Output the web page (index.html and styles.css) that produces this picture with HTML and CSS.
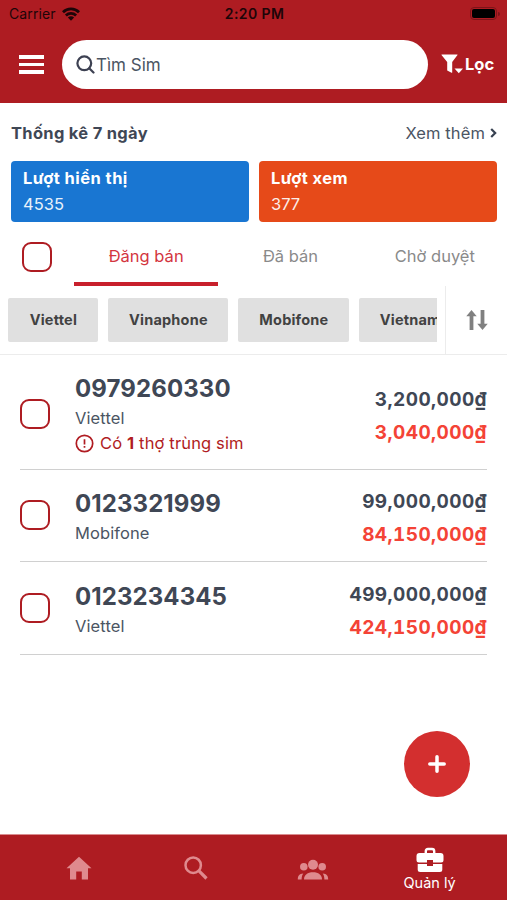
FILE: index.html
```html
<!DOCTYPE html>
<html lang="vi">
<head>
    <meta charset="UTF-8">
    <meta name="viewport" content="width=device-width, initial-scale=1.0">
    <title>Quản lý sim</title>
    <link rel="stylesheet" href="styles.css">
</head>
<body>
    <div class="app">
        <header class="header">
            <div class="status-bar">
                <div class="carrier">
                    <span>Carrier</span>
                    <svg width="18" height="14" viewBox="0 0 18 14" fill="none" stroke="#1d0508" stroke-width="2.8">
                        <path d="M1 5.2C5.500.8 12.500.8 17 5.200"/>
                        <path d="M3.900 8.500c2.900-2.800 7.300-2.800 10.200 0"/>
                        <path d="M9 13.800 5.900 10.600c1.800-1.700 4.400-1.700 6.200 0z" fill="#1d0508" stroke="none"/>
                    </svg>
                </div>
                <span class="time">2:20 PM</span>
                <div class="battery-wrap">
                    <div class="battery"><div class="battery-level"></div></div>
                    <div class="battery-tip"></div>
                </div>
            </div>
            <div class="search-row">
                <div class="menu-btn"><span></span><span></span><span></span></div>
                <div class="search-box">
                    <svg width="19" height="19" viewBox="0 0 19 19" fill="none" stroke="#3d4152" stroke-width="2.2" stroke-linecap="round">
                        <circle cx="8.300" cy="8.300" r="6.900"/>
                        <path d="M13.200 13.200 17.500 17.500"/>
                    </svg>
                    <span>Tìm Sim</span>
                </div>
                <div class="filter-btn">
                    <svg width="23" height="20" viewBox="0 0 23 20" fill="#fff">
                        <path d="M.8.500h15.400q.6 0 .3.600L11.200 8v10.300q0 .8-.7.400L6.200 16.500V8L.5 1.100Q.2.500.8.500z"/>
                        <path d="M13.500 14.500h8.500l-4.200 4.700z"/>
                    </svg>
                    <span>Lọc</span>
                </div>
            </div>
        </header>

        <section class="stats">
            <div class="stats-head">
                <strong>Thống kê 7 ngày</strong>
                <span class="more">Xem thêm
                    <svg width="7" height="10" viewBox="0 0 7 10" fill="none" stroke="#374151" stroke-width="2.200"><path d="M1.200 1 5.200 5 1.200 9"/></svg>
                </span>
            </div>
            <div class="stats-cards">
                <div class="card blue"><strong>Lượt hiển thị</strong><span>4535</span></div>
                <div class="card orange"><strong>Lượt xem</strong><span>377</span></div>
            </div>
        </section>

        <div class="tabs">
            <div class="check-all"><span class="checkbox"></span></div>
            <div class="tab active">Đăng bán</div>
            <div class="tab">Đã bán</div>
            <div class="tab">Chờ duyệt</div>
        </div>

        <div class="filters">
            <div class="chips">
                <span class="chip viettel">Viettel</span>
                <span class="chip vinaphone">Vinaphone</span>
                <span class="chip mobifone">Mobifone</span>
                <span class="chip vietnamobile">Vietnamobile</span>
            </div>
            <div class="sort">
                <svg width="22" height="20" viewBox="0 0 22 20" fill="none" stroke="#808080" stroke-width="3.800">
                    <path d="M5.500 20V4"/>
                    <path d="M5.500 0 10.700 6.200H.3z" fill="#808080" stroke="none"/>
                    <path d="M16.500 0v16"/>
                    <path d="M16.500 20 11.300 13.800h10.400z" fill="#808080" stroke="none"/>
                </svg>
            </div>
        </div>

        <main class="list">
            <div class="row tall">
                <span class="checkbox"></span>
                <div class="info">
                    <div class="number">0979260330</div>
                    <div class="provider">Viettel</div>
                    <div class="warning">
                        <svg width="19" height="19" viewBox="0 0 19 19" fill="none" stroke="#b01c22" stroke-width="1.700">
                            <circle cx="9.500" cy="9.500" r="8.200"/>
                            <path d="M9.500 5.300v5.200M9.500 12v1.800"/>
                        </svg>
                        <span>Có <b>1</b> thợ trùng sim</span>
                    </div>
                </div>
                <div class="prices">
                    <div>3,200,000₫</div>
                    <div class="net">3,040,000₫</div>
                </div>
            </div>
            <div class="row">
                <span class="checkbox"></span>
                <div class="info">
                    <div class="number">0123321999</div>
                    <div class="provider">Mobifone</div>
                </div>
                <div class="prices">
                    <div>99,000,000₫</div>
                    <div class="net">84,150,000₫</div>
                </div>
            </div>
            <div class="row">
                <span class="checkbox"></span>
                <div class="info">
                    <div class="number">0123234345</div>
                    <div class="provider">Viettel</div>
                </div>
                <div class="prices">
                    <div>499,000,000₫</div>
                    <div class="net">424,150,000₫</div>
                </div>
            </div>
        </main>

        <div class="fab">
            <svg width="18" height="18" viewBox="0 0 18 18" fill="none" stroke="#fff" stroke-width="3.500" stroke-linecap="round"><path d="M9 1.800v14.400M1.800 9h14.400"/></svg>
        </div>

        <nav class="bottom-nav">
            <div class="nav-item">
                <svg width="26" height="24" viewBox="0 0 26 24" fill="#df8a8e"><path d="M13 .8 25.500 12.200H22V23.500H15.800V15.500H10.200V23.500H4V12.200H.5z"/></svg>
            </div>
            <div class="nav-item">
                <svg width="24" height="24" viewBox="0 0 24 24" fill="none" stroke="#df8a8e"><circle cx="9.200" cy="9.200" r="7.700" stroke-width="2.500"/><path d="M14.700 14.700 22.500 22.500" stroke-width="3.200"/></svg>
            </div>
            <div class="nav-item group">
                <svg width="32" height="22" viewBox="0 0 32 22" fill="#df8a8e">
                    <circle cx="16" cy="5.800" r="5"/>
                    <circle cx="6.800" cy="7.800" r="3.800"/>
                    <circle cx="25.200" cy="7.800" r="3.800"/>
                    <path d="M7 20.500c0-4.500 3.500-7.200 9-7.200s9 2.700 9 7.200z"/>
                    <path d="M.8 20.500c0-3.500 1.500-5.500 5.500-5.900-1.200 1.600-1.600 3.400-1.700 5.900zM31.200 20.500c0-3.500-1.500-5.500-5.500-5.900 1.200 1.600 1.600 3.400 1.700 5.900z"/>
                </svg>
            </div>
            <div class="nav-item active">
                <svg width="28" height="26" viewBox="0 0 28 26" fill="#fff">
                    <path d="M9.800 7V4.200Q9.800 2 12 2h4q2.200 0 2.200 2.200V7" fill="none" stroke="#fff" stroke-width="2.400"/>
                    <path d="M3.500 6h21q3 0 3 3v4q0 2.500-2.500 2.500H17V13h-6v2.500H3Q.5 15.500.5 13V9q0-3 3-3z"/>
                    <path d="M1.700 17h9.300v2h6v-2h9.300v5.500q0 2.500-2.500 2.500H4.200q-2.500 0-2.500-2.500z"/>
                </svg>
                <span>Quản lý</span>
            </div>
        </nav>
    </div>
</body>
</html>
```
FILE: styles.css
```css
* {
    box-sizing: border-box;
}
body {
    margin: 0;
    font-family: Inter, "Liberation Sans", sans-serif;
    font-size: 16.5px;
    color: #3f4755;
    background: #fff;
}
svg {
    display: block;
    flex-shrink: 0;
}
.app {
    position: relative;
    display: flex;
    flex-direction: column;
    width: 507px;
    height: 900px;
    overflow: hidden;
}

/* header */
.header {
    height: 103px;
    background: #ae1c22;
}
.status-bar {
    display: grid;
    grid-template-columns: 1fr auto 1fr;
    align-items: center;
    height: 27px;
    padding: 0 7px 0 9px;
    font-size: 14px;
    color: #1d0508;
}
.carrier {
    display: flex;
    align-items: center;
    gap: 6px;
    letter-spacing: 0.1px;
}
.time {
    font-weight: 600;
    letter-spacing: 0.4px;
}
.battery-wrap {
    display: flex;
    align-items: center;
    justify-content: flex-end;
    gap: 1px;
}
.battery {
    width: 27px;
    height: 13px;
    padding: 1px;
    border: 1px solid #7d1419;
    border-radius: 4px;
}
.battery-level {
    height: 100%;
    border-radius: 2px;
    background: #000;
}
.battery-tip {
    width: 2px;
    height: 4px;
    border-radius: 0 2px 2px 0;
    background: #7d1419;
}
.search-row {
    display: flex;
    align-items: center;
    height: 75px;
    padding: 0 12px 0 19px;
}
.menu-btn {
    display: flex;
    flex-direction: column;
    gap: 4px;
    width: 25px;
    margin-right: 18px;
}
.menu-btn span {
    height: 3.5px;
    background: #fff;
}
.search-box {
    display: flex;
    align-items: center;
    gap: 1px;
    width: 366px;
    height: 49px;
    padding-left: 14px;
    border-radius: 25px;
    background: #fff;
    color: #4b5563;
    font-size: 17px;
}
.filter-btn {
    display: flex;
    align-items: center;
    gap: 1px;
    margin-left: 13px;
    padding-bottom: 1px;
    color: #fff;
    font-size: 16.5px;
    font-weight: 700;
}

/* statistics */
.stats {
    padding: 0 10px 0 11px;
}
.stats-head {
    display: flex;
    align-items: center;
    justify-content: space-between;
    height: 58px;
    padding-top: 2px;
}
.stats-head strong {
    font-weight: 700;
    letter-spacing: 0.3px;
}
.more {
    display: flex;
    align-items: center;
    gap: 5px;
    letter-spacing: 0.1px;
    color: #4b5563;
}
.stats-cards {
    display: grid;
    grid-template-columns: 1fr 1fr;
    gap: 10px;
}
.card {
    height: 61px;
    padding: 4px 12px;
    border-radius: 4px;
    color: #fff;
    line-height: 26px;
}
.card strong,
.card span {
    display: block;
}
.card strong {
    font-weight: 700;
    letter-spacing: 0.45px;
}
.card span {
    opacity: 0.9;
}
.blue {
    background: #1976d2;
}
.orange {
    background: #e64a19;
}

/* tabs */
.tabs {
    display: flex;
    height: 64px;
    padding-top: 5px;
}
.check-all {
    display: flex;
    align-items: center;
    justify-content: center;
    width: 74px;
    height: 59px;
}
.checkbox {
    width: 30px;
    height: 30px;
    border: 2px solid #ae1c22;
    border-radius: 9px;
    flex-shrink: 0;
}
.tab {
    flex: 1;
    height: 59px;
    line-height: 59px;
    text-align: center;
    color: #8a8a8a;
}
.tab.active {
    color: #d33540;
    border-bottom: 4px solid #c8202c;
}

/* provider filters */
.filters {
    display: flex;
    height: 69px;
    border-bottom: 1px solid #ececec;
}
.chips {
    display: flex;
    gap: 10px;
    width: 437px;
    padding: 12px 0 0 8.4px;
    overflow: hidden;
}
.chip {
    flex-shrink: 0;
    height: 44px;
    line-height: 44px;
    border-radius: 2px;
    background: #e0e0e0;
    color: #424242;
    font-size: 14.5px;
    font-weight: 700;
    letter-spacing: 0.2px;
    text-align: center;
}
.viettel {
    width: 90px;
}
.vinaphone {
    width: 120px;
}
.mobifone {
    width: 111px;
}
.vietnamobile {
    width: 137px;
}
.sort {
    display: flex;
    flex: 1;
    align-items: center;
    justify-content: center;
    margin-left: 8px;
    border-left: 1px solid #ececec;
}

/* sim list */
.list {
    flex: 1;
    padding: 1px 20px 0;
}
.row {
    display: flex;
    align-items: center;
    height: 92.5px;
    border-bottom: 1px solid #d0d0d0;
}
.row.tall {
    height: 113.5px;
}
.row.tall .checkbox {
    margin-top: 3px;
}
.info {
    flex: 1;
    padding: 4px 0 0 25px;
}
.number {
    font-size: 24px;
    font-weight: 700;
    line-height: 32px;
    letter-spacing: 0.1px;
}
.provider {
    line-height: 26px;
    letter-spacing: 0.1px;
    color: #4b5563;
}
.warning {
    display: flex;
    align-items: center;
    gap: 6px;
    height: 25px;
    letter-spacing: 0.15px;
    color: #b01c22;
}
.prices {
    padding-top: 6px;
    font-size: 19px;
    font-weight: 700;
    font-variant-numeric: tabular-nums;
    letter-spacing: 0.4px;
    line-height: 33px;
    text-align: right;
}
.tall .prices {
    padding-top: 8px;
}
.net {
    color: #f44336;
}

/* floating button */
.fab {
    position: absolute;
    left: 404px;
    top: 731px;
    display: flex;
    align-items: center;
    justify-content: center;
    width: 66px;
    height: 66px;
    border-radius: 50%;
    background: #d32f2f;
}

/* bottom navigation */
.bottom-nav {
    display: flex;
    height: 66px;
    padding: 0 19px 0 21px;
    border-top: 1px solid #d98c8f;
    background: #ae1c22;
}
.nav-item {
    display: flex;
    flex: 1;
    flex-direction: column;
    align-items: center;
    justify-content: center;
    color: #fff;
    font-size: 14.5px;
}
.nav-item.group {
    padding-top: 4px;
}
.nav-item.active {
    justify-content: flex-start;
    padding-top: 12px;
}
.nav-item span {
    line-height: 19px;
}
```
